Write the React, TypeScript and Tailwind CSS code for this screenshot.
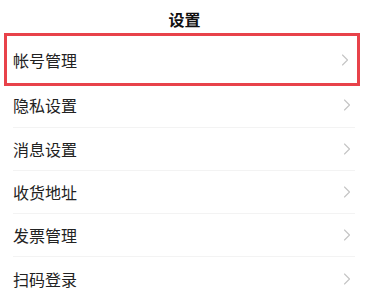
import React from "react";

const items = ["隐私设置", "消息设置", "收货地址", "发票管理", "扫码登录"];

function Chevron() {
  return (
    <svg width="8" height="12" viewBox="0 0 8 12" className="shrink-0">
      <polyline points="1.5,1 6.5,6 1.5,11" fill="none" stroke="#c4c4c4" strokeWidth="1.1" strokeLinecap="round" strokeLinejoin="round" />
    </svg>
  );
}

export default function App() {
  return (
    <div
      className="w-[369px] h-[298px] bg-white overflow-hidden text-[#222]"
      style={{ fontFamily: '"Noto Sans CJK SC", "Noto Sans", sans-serif' }}
    >
      <div className="h-[33px] flex items-center justify-center pt-[5px]">
        <span className="text-[16px] font-bold text-[#111] leading-none">设置</span>
      </div>
      <div className="ml-[4px] mr-[9px] h-[53px] border-[3px] border-[#e8424a] flex items-center pl-[6px] pr-[8px] justify-between">
        <span className="text-[16px] leading-none">帐号管理</span>
        <Chevron />
      </div>
      <div className="pl-[13px] pr-[14px]">
        {items.map((t, i) => (
          <div
            key={t}
            className={`flex items-center justify-between pr-[4px] ${
              i === 0 ? "h-[42px] pb-[3px]" : "h-[43px]"
            } ${i < items.length - 1 ? "border-b border-[#f3f3f3]" : ""}`}
          >
            <span className="text-[16px] leading-none">{t}</span>
            <Chevron />
          </div>
        ))}
      </div>
    </div>
  );
}
